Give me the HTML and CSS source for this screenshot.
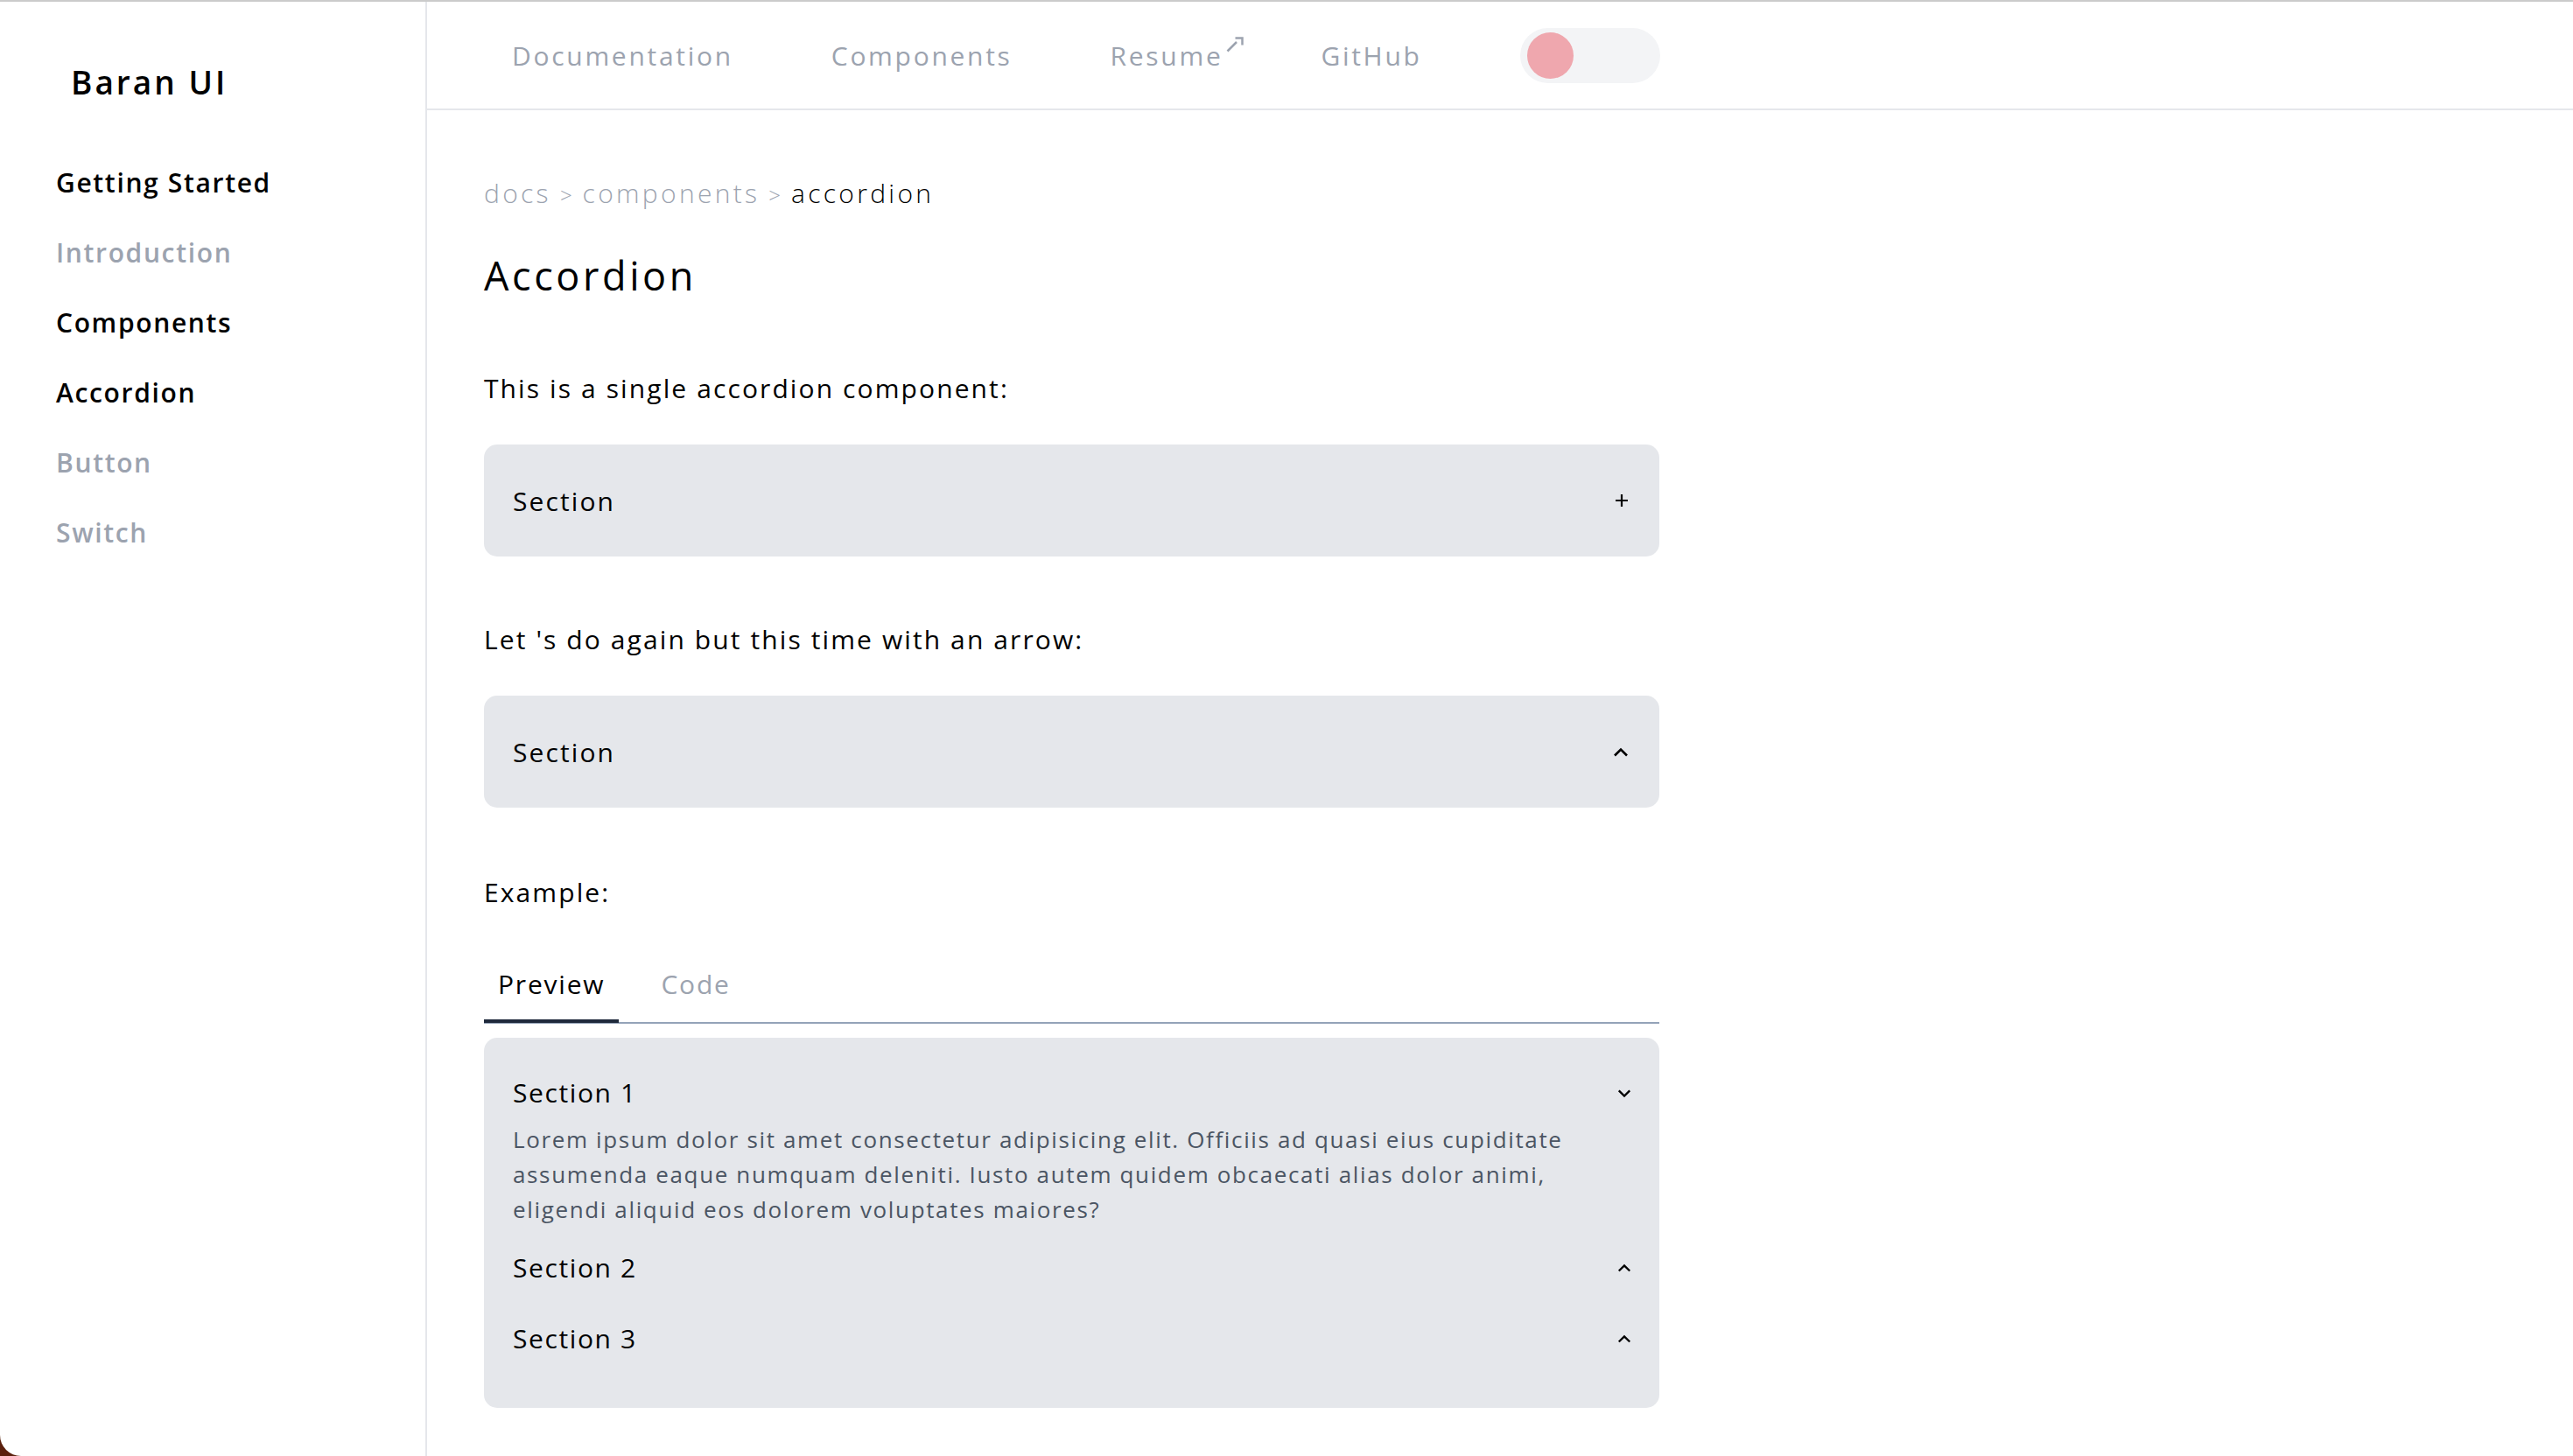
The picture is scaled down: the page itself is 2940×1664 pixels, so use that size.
FILE: index.html
```html
<!DOCTYPE html>
<html lang="en">
<head>
    <meta charset="UTF-8">
    <title>Accordion - Baran UI</title>
    <link rel="stylesheet" href="styles.css">
</head>
<body>
    <div class="window">
        <aside class="sidebar">
            <a href="#" class="logo">Baran UI</a>
            <nav class="side-nav">
                <a href="#" class="side-heading">Getting Started</a>
                <a href="#" class="side-link">Introduction</a>
                <a href="#" class="side-heading">Components</a>
                <a href="#" class="side-heading">Accordion</a>
                <a href="#" class="side-link">Button</a>
                <a href="#" class="side-link">Switch</a>
            </nav>
        </aside>

        <div class="main">
            <header class="topbar">
                <nav class="topbar-links">
                    <a href="#">Documentation</a>
                    <a href="#">Components</a>
                    <a href="#" class="external">Resume
                        <svg class="external-icon" viewBox="0 0 20 18" width="20" height="18">
                            <path d="M1.5 16.5 L12 6" />
                            <path d="M10.5 1.5 H18.5 V9.5" />
                        </svg>
                    </a>
                    <a href="#">GitHub</a>
                </nav>
                <button class="theme-toggle" aria-label="Toggle theme"><span class="knob"></span></button>
            </header>

            <main class="content">
                <div class="breadcrumb">
                    <span class="crumb">docs</span><span class="crumb-sep">&gt;</span><span class="crumb">components</span><span class="crumb-sep">&gt;</span><span class="crumb current">accordion</span>
                </div>

                <h1 class="page-title">Accordion</h1>

                <p class="text">This is a single accordion component:</p>
                <div class="accordion">
                    <span>Section</span>
                    <svg class="icon-plus" viewBox="0 0 16 16" width="16" height="16">
                        <path d="M8 1 V15 M1 8 H15" />
                    </svg>
                </div>

                <p class="text">Let 's do again but this time with an arrow:</p>
                <div class="accordion">
                    <span>Section</span>
                    <svg class="chevron" viewBox="0 0 18 11" width="18" height="11">
                        <path d="M2 9.5 L9 2.5 L16 9.5" />
                    </svg>
                </div>

                <p class="text example">Example:</p>
                <div class="tabs">
                    <span class="tab active">Preview</span>
                    <span class="tab">Code</span>
                </div>

                <div class="preview">
                    <div class="preview-item open">
                        <div class="preview-header">
                            <span>Section 1</span>
                            <svg class="chevron small" viewBox="0 0 18 11" width="16" height="10">
                                <path d="M2 2.5 L9 9.5 L16 2.5" />
                            </svg>
                        </div>
                        <p class="preview-body">Lorem ipsum dolor sit amet consectetur adipisicing elit. Officiis ad quasi eius cupiditate assumenda eaque numquam deleniti. Iusto autem quidem obcaecati alias dolor animi, eligendi aliquid eos dolorem voluptates maiores?</p>
                    </div>
                    <div class="preview-item">
                        <div class="preview-header">
                            <span>Section 2</span>
                            <svg class="chevron small" viewBox="0 0 18 11" width="16" height="10">
                                <path d="M2 9.5 L9 2.5 L16 9.5" />
                            </svg>
                        </div>
                    </div>
                    <div class="preview-item">
                        <div class="preview-header">
                            <span>Section 3</span>
                            <svg class="chevron small" viewBox="0 0 18 11" width="16" height="10">
                                <path d="M2 9.5 L9 2.5 L16 9.5" />
                            </svg>
                        </div>
                    </div>
                </div>
            </main>
        </div>
    </div>
</body>
</html>
```

FILE: styles.css
```css
/* Base */
html {
    background-color: #5a200d;
}

body {
    margin: 0;
    font-family: "Open Sans", "Liberation Sans", sans-serif;
    color: #000;
}

a {
    text-decoration: none;
    color: inherit;
}

.window {
    display: flex;
    height: 1664px;
    box-sizing: border-box;
    background-color: #fff;
    border-top: 2px solid #cbcbcb;
    border-radius: 0 0 0 24px;
    overflow: hidden;
}

/* Sidebar */
.sidebar {
    width: 488px;
    flex-shrink: 0;
    box-sizing: border-box;
    border-right: 2px solid #e5e7eb;
    padding: 64px 0 0 64px;
}

.logo {
    display: block;
    margin-left: 17px;
    font-size: 37px;
    line-height: 56px;
    font-weight: 600;
    letter-spacing: 3px;
}

.side-nav {
    display: flex;
    flex-direction: column;
    gap: 35px;
    margin-top: 64px;
}

.side-nav a {
    font-size: 30px;
    line-height: 45px;
    font-weight: 600;
    letter-spacing: 0.055em;
}

.side-heading {
    color: #000;
}

.side-link {
    color: #9ca3af;
}

/* Top bar */
.main {
    flex: 1;
    display: flex;
    flex-direction: column;
}

.topbar {
    height: 122px;
    border-bottom: 2px solid #e5e7eb;
    display: flex;
    align-items: center;
    padding-left: 41px;
}

.topbar-links {
    display: flex;
}

.topbar-links a {
    padding: 0 56px;
    font-size: 30px;
    line-height: 45px;
    font-weight: 500;
    letter-spacing: 0.09em;
    color: #9ca3af;
}

.external {
    position: relative;
}

.external-icon {
    position: absolute;
    right: 32px;
    top: 1px;
    fill: none;
    stroke: #9ca3af;
    stroke-width: 2.5;
}

.theme-toggle {
    margin-left: 56px;
    width: 160px;
    height: 63px;
    border: none;
    border-radius: 32px;
    background-color: #f3f4f6;
    padding: 0 0 0 8px;
    display: flex;
    align-items: center;
}

.knob {
    width: 53px;
    height: 53px;
    border-radius: 50%;
    background-color: #efa7ae;
}

/* Content */
.content {
    width: 1343px;
    padding-left: 65px;
}

.breadcrumb {
    margin-top: 72px;
    font-size: 30px;
    line-height: 45px;
    font-weight: 300;
    letter-spacing: 0.11em;
    color: #9ca3af;
}

.crumb-sep {
    margin: 0 12px 0 10px;
    font-size: 24px;
    letter-spacing: 0;
}

.crumb.current {
    color: #000;
}

.page-title {
    margin: 40px 0 0;
    font-size: 45px;
    line-height: 60px;
    font-weight: 400;
    letter-spacing: 0.08em;
}

.text {
    margin: 76px 0 0;
    font-size: 30px;
    line-height: 45px;
    letter-spacing: 2.1px;
}

.accordion {
    margin-top: 42px;
    height: 128px;
    box-sizing: border-box;
    padding: 0 35px 0 33px;
    border-radius: 15px;
    background-color: #e5e7eb;
    display: flex;
    justify-content: space-between;
    align-items: center;
    font-size: 30px;
    letter-spacing: 2.1px;
}

.accordion + .text {
    margin-top: 72px;
}

.accordion + .text.example {
    margin-top: 74px;
}

.icon-plus {
    stroke: #000;
    stroke-width: 2.2;
}

.chevron {
    fill: none;
    stroke: #000;
    stroke-width: 2.6;
}

/* Tabs */
.tabs {
    margin-top: 60px;
    display: flex;
    gap: 32px;
    border-bottom: 2px solid #94a3b8;
}

.tab {
    padding: 0 16px 18px;
    font-size: 30px;
    line-height: 45px;
    letter-spacing: 0.06em;
    color: #9ca3af;
    border-bottom: 4px solid transparent;
    margin-bottom: -1px;
}

.tab.active {
    color: #000;
    border-bottom-color: #1e293b;
}

/* Preview panel */
.preview {
    margin-top: 16px;
    padding: 22px 32px 39px 33px;
    border-radius: 15px;
    background-color: #e5e7eb;
}

.preview-item {
    padding: 18px 0;
}

.preview-item.open {
    padding-bottom: 6px;
}

.preview-header {
    display: flex;
    justify-content: space-between;
    align-items: center;
    font-size: 30px;
    line-height: 45px;
    letter-spacing: 1.6px;
}

.preview-body {
    margin: 0;
    padding: 11px 60px 0 0;
    font-size: 26px;
    line-height: 40px;
    letter-spacing: 0.063em;
    color: #4b5563;
}
```
